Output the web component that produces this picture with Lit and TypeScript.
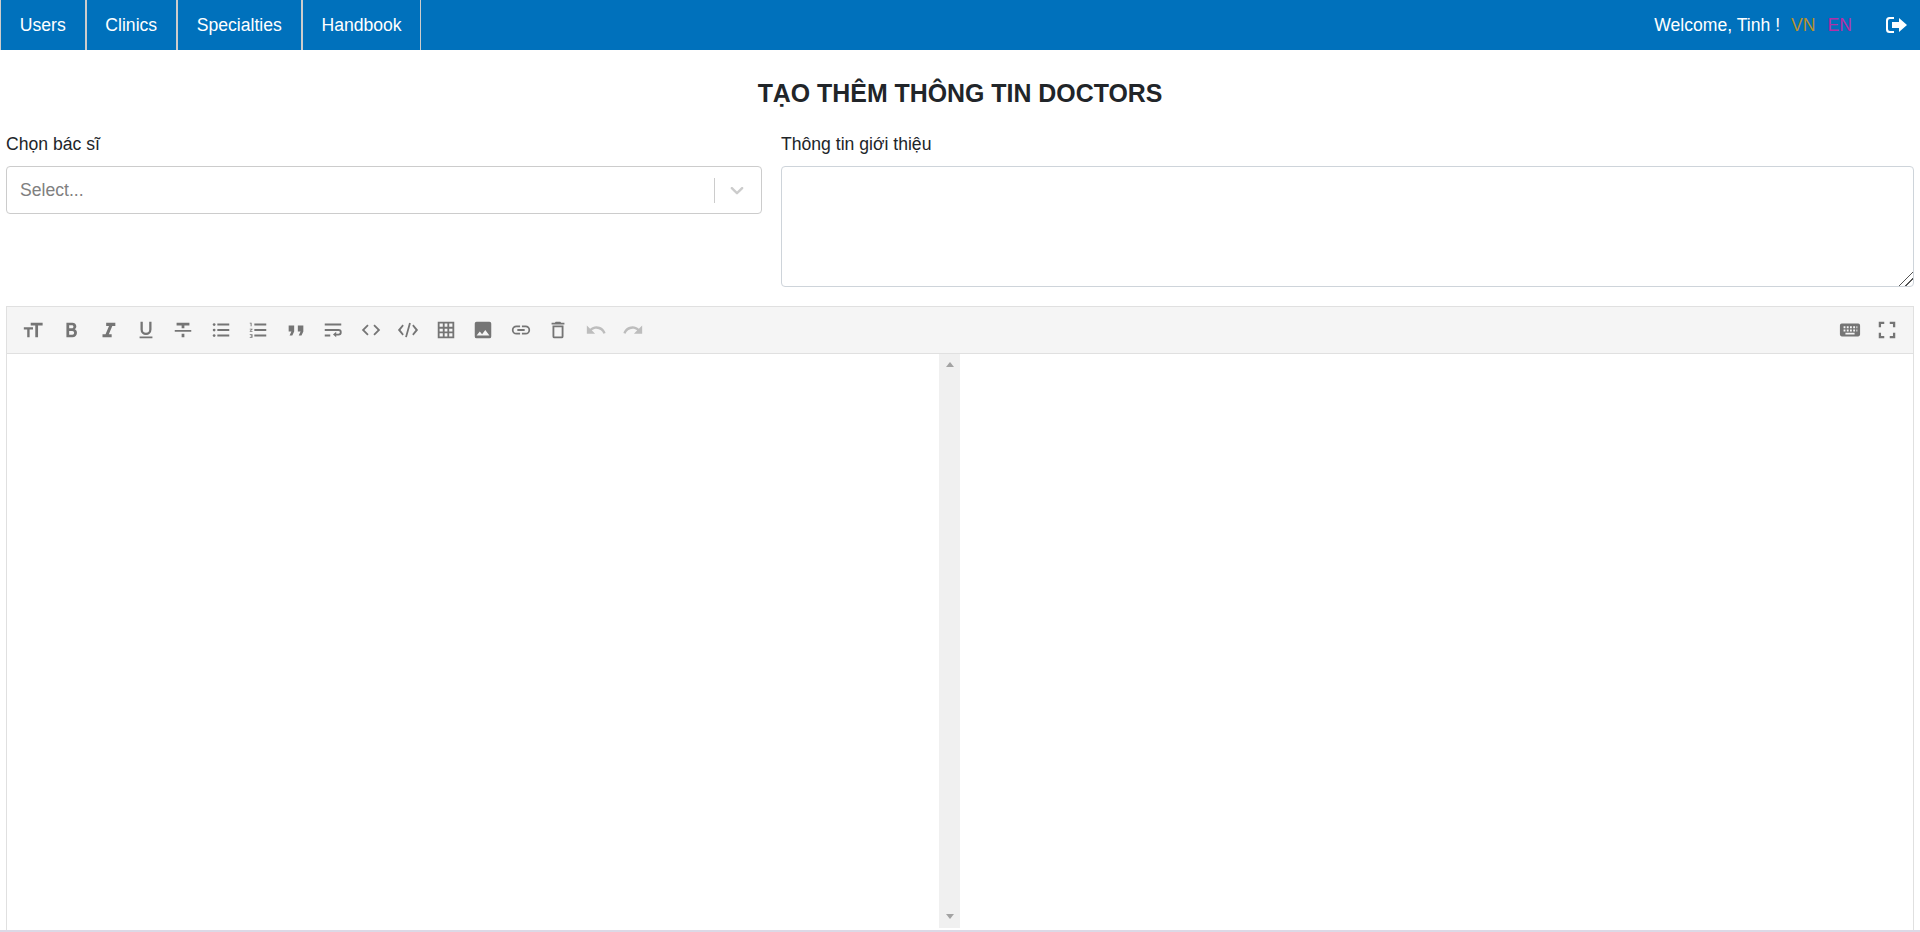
import { LitElement, html, css, svg } from "lit";
import { customElement } from "lit/decorators.js";

// material style glyphs for the markdown editor toolbar, all on a 24 box
const leftIcons = [
	svg`<path d="M2 11.500V9h10v2.500H8.300V20H5.700v-8.500z M9.500 4h13v3h-5v13h-3V7h-5z" />`,
	svg`<path fill-rule="evenodd" d="M7 4h6.500c2.600 0 4.300 1.600 4.300 3.900 0 1.400-.7 2.600-1.800 3.300 1.500.6 2.500 2 2.500 3.800 0 2.900-2 5-5 5H7z M10 6.800v3.300h3c1 0 1.700-.7 1.700-1.650 0-1-.7-1.650-1.700-1.650z M10 13v4.200h3.400c1.200 0 2-.9 2-2.100s-.8-2.100-2-2.100z" />`,
	svg`<path d="M10 4h10v3.500h-3.300l-3.800 9H16V20H6v-3.500h3.300l3.800-9H10z" />`,
	svg`<path d="M6 3h2.500v8.500a3.500 3.500 0 0 0 7 0V3H18v8.500a6 6 0 0 1-12 0z M5 19h14v2H5z" />`,
	svg`<path d="M5 4h14v3h-5.500v3h-3V7H5z M3 12h18v2H3z M10.500 16h3v4h-3z" />`,
	svg`<path d="M8 5h13v2H8z M8 11h13v2H8z M8 17h13v2H8z" /><circle cx="4.500" cy="6" r="1.500" /><circle cx="4.500" cy="12" r="1.500" /><circle cx="4.500" cy="18" r="1.500" />`,
	svg`<path d="M8 5h13v2H8z M8 11h13v2H8z M8 17h13v2H8z M3 4h2v4H4V5H3z M3 10.500h3v1l-2 1.500h2v1H3v-1l2-1.500H3z M3 16.500h3v4H3v-1h2v-.5H4v-1h1v-.5H3z" />`,
	svg`<path d="M4 7h6v6.500L8 18H5l2-4.500H4z M14 7h6v6.500L18 18h-3l2-4.500h-3z" />`,
	svg`<path d="M3 5h18v2H3z M3 11h15a3.500 3.500 0 0 1 0 7h-2.500v2l-3.500-3 3.500-3v2H18a1.500 1.500 0 0 0 0-3H3z M3 17h6v2H3z" />`,
	svg`<path d="M9.400 16.600 4.800 12l4.600-4.600L8 6l-6 6 6 6z M14.600 16.600 19.200 12l-4.600-4.600L16 6l6 6-6 6z" />`,
	svg`<path d="M7.400 16.600 3.800 12l3.600-4.600L6 6l-5 6 5 6z M16.600 16.600 20.200 12l-3.600-4.600L18 6l5 6-5 6z M13.200 4l1.900.5L10.800 20l-1.900-.5z" />`,
	svg`<path fill-rule="evenodd" d="M3 3h18v18H3z M5 5v3.500h3.500V5z M10.500 5v3.500h3V5z M15.500 5v3.500H19V5z M5 10.500v3h3.500v-3z M10.500 10.500v3h3v-3z M15.500 10.500v3H19v-3z M5 15.500V19h3.500v-3.500z M10.500 15.500V19h3v-3.500z M15.500 15.500V19H19v-3.500z" />`,
	svg`<path d="M21 19V5a2 2 0 0 0-2-2H5a2 2 0 0 0-2 2v14a2 2 0 0 0 2 2h14a2 2 0 0 0 2-2zM8.500 13.500l2.500 3 3.500-4.500 4.500 6H5z" />`,
	svg`<path d="M3.900 12A3.100 3.100 0 0 1 7 8.900h4V7H7a5 5 0 0 0 0 10h4v-1.900H7A3.100 3.100 0 0 1 3.900 12zM8 13h8v-2H8zm9-6h-4v1.900h4a3.100 3.100 0 0 1 0 6.200h-4V17h4a5 5 0 0 0 0-10z" />`,
	svg`<path fill-rule="evenodd" d="M6 19a2 2 0 0 0 2 2h8a2 2 0 0 0 2-2V7H6z M8 9h8v10H8z M15.500 4l-1-1h-5l-1 1H5v2h14V4z" />`,
];

const undoIcon = svg`<path d="M12.500 8c-2.650 0-5.050 1-6.900 2.600L2 7v9h9l-3.620-3.620c1.390-1.160 3.160-1.880 5.120-1.880 3.540 0 6.550 2.310 7.600 5.500l2.370-.78C21.080 11.030 17.150 8 12.500 8z" />`;
const redoIcon = svg`<path d="M18.400 10.600C16.550 9 14.150 8 11.500 8c-4.650 0-8.580 3.030-9.970 7.220l2.370.78C4.950 12.810 7.960 10.500 11.500 10.500c1.960 0 3.730.72 5.120 1.880L13 16h9V7z" />`;
const keyboardIcon = svg`<path fill-rule="evenodd" d="M3 5h18a2 2 0 0 1 2 2v10a2 2 0 0 1-2 2H3a2 2 0 0 1-2-2V7a2 2 0 0 1 2-2z M5 8v2h2V8z M8.500 8v2h2V8z M12 8v2h2V8z M15.500 8v2h2V8z M19 8v2h1V8z M5 11.500v2h2v-2z M8.500 11.500v2h2v-2z M12 11.500v2h2v-2z M15.500 11.500v2h2v-2z M19 11.500v2h1v-2z M7 15v2h10v-2z" />`;
const fullscreenIcon = svg`<path d="M3 3h6v2.500H5.500V9H3z M15 3h6v6h-2.500V5.500H15z M3 15h2.500v3.500H9V21H3z M18.500 15H21v6h-6v-2.500h3.500z" />`;

@customElement("app-root")
export class AppRoot extends LitElement {
	static styles = css`
		:host {
			display: block;
			height: 932px;
			overflow: hidden;
			background: #fff;
			color: #212529;
			font-family: "Liberation Sans", Arial, sans-serif;
			font-size: 17.6px;
		}

		.nav {
			display: flex;
			justify-content: space-between;
			align-items: center;
			height: 50px;
			background: #0071bc;
			color: #fff;
		}

		.menu {
			display: flex;
			height: 100%;
		}

		.menu-item {
			display: flex;
			align-items: center;
			height: 100%;
			padding: 0 18.800px;
			border-left: 1px solid #ccc;
		}

		.menu-item:nth-child(n + 2) {
			border-left-width: 2px;
		}

		.menu-item:last-child {
			border-right: 1px solid #ccc;
		}

		.right {
			display: flex;
			align-items: center;
			padding-right: 13px;
		}

		.vn {
			margin-left: 11px;
			color: #b8902b;
		}

		.en {
			margin-left: 12px;
			color: #b52ea6;
		}

		.logout {
			width: 21px;
			height: 16px;
			margin-left: 34px;
			fill: #fff;
		}

		h1 {
			margin: 0;
			padding-top: 29px;
			height: 61px;
			box-sizing: border-box;
			text-align: center;
			font-size: 24.900px;
			line-height: 29px;
			font-weight: 700;
		}

		.fields {
			display: grid;
			grid-template-columns: 756px 1133px;
			gap: 19px;
			height: 195px;
			padding: 21px 6px 0;
			box-sizing: border-box;
		}

		label {
			display: block;
			height: 24px;
			line-height: 24px;
			margin-bottom: 10px;
		}

		.select {
			display: flex;
			align-items: center;
			height: 48px;
			box-sizing: border-box;
			border: 1px solid #ccc;
			border-radius: 4px;
			padding-left: 13px;
			color: #808080;
		}

		.select span {
			flex: 1;
		}

		.sep {
			width: 1px;
			height: 25px;
			background: #ccc;
		}

		.chevron {
			width: 22px;
			height: 22px;
			margin: 0 13px 0 11px;
			fill: #ccc;
		}

		textarea {
			display: block;
			width: 100%;
			height: 121px;
			box-sizing: border-box;
			border: 1px solid #ced4da;
			border-radius: 4px;
			outline: none;
			padding: 6px 12px;
		}

		textarea::-webkit-resizer {
			background: linear-gradient(
				135deg,
				transparent 0 50%,
				#555 50% 56%,
				transparent 56% 72%,
				#555 72% 78%,
				transparent 78%
			);
		}

		.editor {
			display: flex;
			flex-direction: column;
			height: 624px;
			margin: 0 6px;
			border: 1px solid #e0e0e0;
			border-bottom: 0;
			box-sizing: border-box;
		}

		.toolbar {
			display: flex;
			justify-content: space-between;
			align-items: center;
			height: 47px;
			flex-shrink: 0;
			box-sizing: border-box;
			background: #f5f5f5;
			border-bottom: 1px solid #e0e0e0;
			padding: 0 15px;
		}

		.tools {
			display: flex;
			gap: 15.500px;
		}

		.tools svg {
			display: block;
			width: 22px;
			height: 22px;
			fill: #757575;
		}

		.tools svg.disabled {
			fill: #bdbdbd;
		}

		.tools.end {
			gap: 15px;
		}

		.panes {
			flex: 1;
			display: flex;
		}

		.pane {
			flex: 1;
			min-width: 0;
			display: flex;
			justify-content: flex-end;
		}

		.scrollbar {
			display: flex;
			flex-direction: column;
			justify-content: space-between;
			align-items: center;
			width: 21px;
			height: 574px;
			padding: 8px 0 9px;
			box-sizing: border-box;
			background: #f0f0f0;
		}

		.arrow-up,
		.arrow-down {
			width: 0;
			height: 0;
			border-left: 4.500px solid transparent;
			border-right: 4.500px solid transparent;
		}

		.arrow-up {
			border-bottom: 5px solid #a3a3a3;
		}

		.arrow-down {
			border-top: 5px solid #a3a3a3;
		}

		.base-line {
			height: 2px;
			background: #dcd9e6;
		}
	`;

	render() {
		return html`
			<nav class="nav">
				<div class="menu">
					${["Users", "Clinics", "Specialties", "Handbook"].map((name) => html`<div class="menu-item">${name}</div>`)}
				</div>
				<div class="right">
					<span>Welcome, Tinh !</span>
					<span class="vn">VN</span>
					<span class="en">EN</span>
					<svg class="logout" viewBox="0 0 21 16" aria-hidden="true">
						<path
							d="M8 2H4a2 2 0 0 0-2 2v8a2 2 0 0 0 2 2h4v2H3.500A3.500 3.500 0 0 1 0 12.500v-9A3.500 3.500 0 0 1 3.500 0H8z M13 1l8 7-8 7v-4H6V5h7z"
						/>
					</svg>
				</div>
			</nav>
			<h1>TẠO THÊM THÔNG TIN DOCTORS</h1>
			<div class="fields">
				<div>
					<label>Chọn bác sĩ</label>
					<div class="select">
						<span>Select...</span>
						<div class="sep"></div>
						<svg class="chevron" viewBox="0 0 20 20" aria-hidden="true">
							<path
								d="M4.516 7.548c.436-.446 1.043-.481 1.576 0L10 11.295l3.908-3.747c.533-.481 1.141-.446 1.574 0 .436.445.408 1.197 0 1.615-.406.418-4.695 4.502-4.695 4.502a1.095 1.095 0 0 1-1.576 0S5.012 9.581 4.516 9.163c-.409-.418-.436-1.17 0-1.615z"
							/>
						</svg>
					</div>
				</div>
				<div>
					<label>Thông tin giới thiệu</label>
					<textarea></textarea>
				</div>
			</div>
			<div class="editor">
				<div class="toolbar">
					<div class="tools">
						${leftIcons.map((icon) => svg`<svg viewBox="0 0 24 24" aria-hidden="true">${icon}</svg>`)}
						<svg class="disabled" viewBox="0 0 24 24" aria-hidden="true">${undoIcon}</svg>
						<svg class="disabled" viewBox="0 0 24 24" aria-hidden="true">${redoIcon}</svg>
					</div>
					<div class="tools end">
						<svg viewBox="0 0 24 24" aria-hidden="true">${keyboardIcon}</svg>
						<svg viewBox="0 0 24 24" aria-hidden="true">${fullscreenIcon}</svg>
					</div>
				</div>
				<div class="panes">
					<div class="pane">
						<div class="scrollbar">
							<div class="arrow-up"></div>
							<div class="arrow-down"></div>
						</div>
					</div>
					<div class="pane"></div>
				</div>
			</div>
			<div class="base-line"></div>
		`;
	}
}
